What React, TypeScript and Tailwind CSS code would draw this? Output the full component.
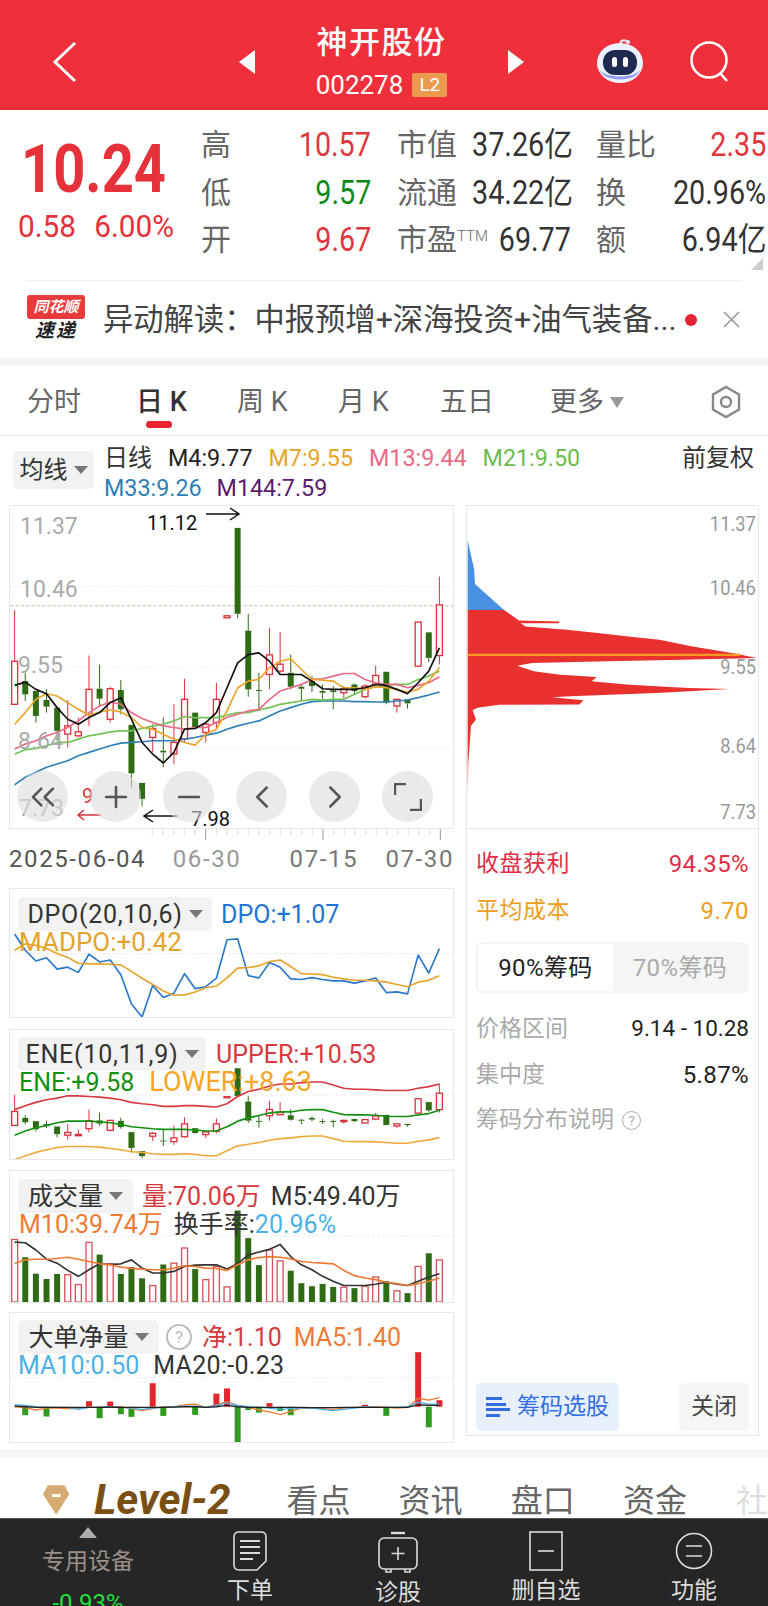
import React from "react";
import { ChevronLeft, ChevronRight, ChevronsLeft, Minus, Plus } from "lucide-react";

// x position of the n-th trading day, in the coordinates of the chart viewBoxes
const xAt = (i: number) => 42 + 32 * i;
const pts = (ys: number[]) => ys.map((y, i) => `${xAt(i)},${y}`).join(" ");

// [hi, bodyTop, bodyBottom, lo, up?]
type Candle = [number, number, number, number, boolean];
const candles: Candle[] = [
  [750, 905, 1035, 1035, true], [940, 965, 1005, 1025, false], [995, 995, 1070, 1090, false],
  [990, 1022, 1042, 1060, false], [1045, 1045, 1115, 1145, false], [1022, 1100, 1125, 1165, true],
  [1075, 1118, 1130, 1135, true], [888, 990, 1065, 1100, true], [915, 988, 1018, 1040, false],
  [982, 988, 1080, 1090, true], [962, 992, 1050, 1065, false], [1097, 1097, 1243, 1285, false],
  [1272, 1272, 1320, 1342, false], [1095, 1108, 1135, 1180, true], [1075, 1175, 1180, 1225, false],
  [1035, 1150, 1185, 1215, true], [958, 1020, 1140, 1150, true], [1060, 1060, 1105, 1110, false],
  [1090, 1095, 1120, 1150, true], [970, 1020, 1090, 1110, true], [768, 768, 774, 774, true],
  [503, 503, 762, 775, false], [762, 813, 990, 1012, false], [940, 992, 995, 1055, false],
  [806, 886, 945, 990, true], [817, 914, 935, 940, true], [885, 940, 982, 990, false],
  [975, 982, 988, 1025, false], [950, 965, 980, 998, false], [975, 995, 1000, 1020, false],
  [980, 993, 998, 1050, false], [980, 988, 1000, 1018, true], [972, 975, 995, 1005, false],
  [975, 980, 1012, 1018, true], [918, 948, 975, 985, true], [937, 937, 1030, 1035, false],
  [1020, 1020, 1040, 1060, true], [1020, 1020, 1032, 1048, false], [787, 787, 920, 920, true],
  [818, 818, 895, 908, false], [650, 735, 888, 915, true],
];

const m4 = [978, 968, 990, 1003, 1045, 1080, 1095, 1075, 1060, 1030, 1015, 1080, 1150, 1185, 1212, 1180, 1110, 1108, 1090, 1060, 985, 910, 885, 880, 905, 945, 945, 945, 965, 988, 990, 990, 990, 985, 975, 978, 990, 1003, 970, 935, 865];
const m7 = [1095, 1060, 1020, 1003, 1010, 1030, 1050, 1068, 1058, 1052, 1058, 1075, 1105, 1110, 1125, 1140, 1150, 1158, 1125, 1110, 1055, 985, 965, 960, 925, 905, 898, 930, 960, 962, 965, 985, 985, 990, 982, 985, 990, 998, 990, 965, 925];
const m13 = [1170, 1155, 1145, 1130, 1120, 1105, 1085, 1060, 1040, 1028, 1035, 1060, 1078, 1090, 1100, 1105, 1110, 1105, 1105, 1090, 1075, 1065, 1055, 1050, 1020, 995, 985, 975, 960, 958, 950, 942, 942, 960, 970, 975, 975, 985, 978, 970, 952];
const m21 = [1185, 1172, 1168, 1160, 1150, 1150, 1140, 1130, 1125, 1118, 1115, 1115, 1108, 1100, 1095, 1085, 1072, 1075, 1075, 1075, 1068, 1060, 1060, 1052, 1045, 1035, 1030, 1025, 1020, 1022, 1020, 1020, 1005, 990, 982, 978, 975, 975, 960, 950, 935];
const m33 = [1278, 1255, 1240, 1225, 1215, 1205, 1190, 1180, 1170, 1160, 1152, 1150, 1148, 1145, 1145, 1145, 1140, 1135, 1128, 1122, 1110, 1100, 1092, 1085, 1070, 1055, 1045, 1035, 1027, 1025, 1025, 1025, 1027, 1027, 1028, 1028, 1025, 1022, 1015, 1007, 998];

const dpo = [160, 210, 243, 233, 268, 262, 278, 222, 246, 240, 285, 375, 415, 318, 355, 342, 282, 328, 322, 296, 178, 175, 288, 295, 248, 262, 298, 300, 294, 300, 304, 304, 311, 304, 295, 340, 338, 344, 225, 280, 205];
const madpo = [210, 190, 195, 205, 220, 232, 250, 252, 252, 253, 255, 275, 296, 315, 335, 348, 347, 338, 325, 320, 295, 265, 263, 258, 245, 240, 260, 282, 283, 285, 293, 298, 302, 302, 304, 308, 315, 322, 308, 302, 288];

const upper = [690, 678, 668, 660, 655, 648, 648, 650, 652, 655, 660, 668, 672, 675, 680, 680, 678, 678, 680, 682, 672, 650, 635, 628, 618, 612, 612, 608, 606, 606, 615, 625, 628, 628, 630, 632, 632, 632, 625, 620, 612];
const ene = [768, 755, 745, 738, 730, 725, 725, 725, 727, 730, 735, 742, 745, 748, 750, 750, 750, 752, 755, 755, 742, 725, 715, 708, 700, 697, 697, 692, 690, 690, 698, 705, 706, 706, 707, 710, 711, 711, 706, 702, 692];
const lower = [842, 830, 820, 812, 805, 802, 802, 802, 804, 808, 812, 818, 820, 824, 826, 826, 824, 826, 830, 830, 815, 800, 795, 790, 783, 778, 776, 772, 770, 770, 778, 786, 787, 787, 788, 790, 792, 792, 786, 782, 775];

// top of each volume bar and whether the day closed up
const vol: [number, boolean][] = [
  [238, true], [292, false], [342, false], [358, false], [343, false], [345, true], [375, true], [247, true], [284, false], [312, true], [343, false],
  [322, false], [356, false], [378, true], [314, false], [310, true], [264, true], [328, false], [360, true], [320, true], [382, true], [150, false],
  [234, false], [316, false], [270, true], [303, true], [333, false], [371, false], [380, false], [373, false], [382, false], [383, true], [386, false],
  [380, true], [352, true], [365, false], [394, true], [401, false], [320, true], [280, false], [300, true],
];
const volM5 = [246, 248, 270, 298, 310, 332, 350, 330, 312, 314, 312, 300, 325, 340, 340, 335, 320, 316, 315, 315, 328, 312, 285, 276, 268, 253, 290, 315, 330, 350, 365, 378, 378, 378, 374, 368, 374, 378, 365, 352, 342];
const volM10 = [310, 300, 298, 298, 296, 292, 298, 305, 312, 315, 322, 326, 328, 330, 330, 325, 318, 320, 325, 326, 332, 315, 300, 293, 290, 292, 297, 305, 308, 310, 312, 332, 348, 355, 360, 368, 372, 378, 372, 365, 355];

const netBars: [number, number][] = [
  [1, 768], [3, 772], [7, 725], [8, 777], [9, 726], [10, 765], [11, 773], [13, 670], [14, 770], [17, 767], [19, 702], [20, 686],
  [21, 850], [22, 752], [23, 760], [24, 731], [25, 755], [26, 768], [33, 736], [35, 770], [38, 575], [39, 805], [40, 722],
];
const netOrange = [742, 745, 752, 746, 746, 748, 748, 744, 744, 742, 742, 748, 754, 748, 742, 742, 736, 734, 744, 736, 726, 738, 744, 752, 758, 766, 756, 746, 746, 748, 750, 746, 744, 742, 742, 744, 746, 744, 716, 722, 714];
const netBlue = [736, 738, 742, 744, 744, 744, 750, 744, 744, 742, 744, 746, 750, 746, 744, 742, 740, 740, 744, 738, 730, 738, 742, 744, 746, 750, 748, 746, 746, 750, 754, 750, 746, 742, 744, 744, 744, 742, 728, 734, 734];
const netBlack = [740, 742, 744, 744, 744, 744, 744, 744, 744, 743, 744, 744, 744, 744, 744, 743, 742, 742, 744, 742, 738, 742, 744, 744, 744, 744, 744, 744, 745, 745, 745, 744, 744, 744, 744, 744, 744, 744, 736, 738, 738];

// chip distribution, in zoom coordinates of the right hand chart
const chipBlue = "20,330 40,420 42,462 130,540 20,540";
const chipRed = "20,540 130,540 175,572 297,575 297,580 180,580 195,590 320,600 420,610 520,622 600,630 700,650 820,670 895,685 670,690 440,695 215,700 170,708 220,725 300,735 410,742 395,755 500,765 590,770 690,775 812,778 690,785 590,790 470,795 330,800 275,803 370,812 358,825 115,826 50,835 35,842 45,870 30,890 22,1000 20,1090";

const Caret = () => (
  <span className="ml-[6px] inline-block w-0 h-0 border-x-[7px] border-x-transparent border-t-[8px] border-t-[#777]" />
);

const Chip = ({ label, w, spread = "" }: { label: string; w: string; spread?: string }) => (
  <span className={`${w} h-[34px] bg-[#f2f2f2] rounded-[5px] flex items-center justify-center text-[25px] text-[#333] whitespace-nowrap ${spread}`}>
    {label}
    <Caret />
  </span>
);

const CandleSet = ({ map = (y: number) => y, w = 18 }: { map?: (y: number) => number; w?: number }) => (
  <>
    {candles.map(([hi, top, bottom, lo, up], i) => {
      const c = up ? "#d8333c" : "#2e6b14";
      const x = xAt(i);
      const t = map(top);
      const h = Math.max(map(bottom) - t, 3);
      return (
        <g key={i}>
          <line x1={x} x2={x} y1={map(hi)} y2={t} stroke={c} strokeWidth={3} />
          <line x1={x} x2={x} y1={t + h} y2={map(lo)} stroke={c} strokeWidth={3} />
          <rect x={x - w / 2} y={t} width={w} height={h} fill={up ? "#fff" : c} stroke={c} strokeWidth={up ? 4 : 0} />
        </g>
      );
    })}
  </>
);

const Line = ({ ys, c, w = 5 }: { ys: number[]; c: string; w?: number }) => (
  <polyline points={pts(ys)} fill="none" stroke={c} strokeWidth={w} strokeLinejoin="round" />
);

const RoundBtn = ({ children }: { children: React.ReactNode }) => (
  <span className="w-[51px] h-[51px] rounded-full bg-[#dcdcdc]/60 flex items-center justify-center text-[#555]">{children}</span>
);

const StatCell = ({ label, value, color }: { label: React.ReactNode; value: string; color: string }) => (
  <div className="w-full h-[47.5px] flex items-center justify-between">
    <span className="text-[30px] text-[#666] whitespace-nowrap">{label}</span>
    <span className={`inline-block scale-x-[0.87] origin-right text-[33px] ${color} whitespace-nowrap`}>{value}</span>
  </div>
);

const AxisLabel = ({ top, children }: { top: string; children: React.ReactNode }) => (
  <span className={`absolute right-[2px] ${top} inline-block scale-x-[0.87] origin-right text-[21px] leading-[26px] text-[#999]`}>{children}</span>
);

const NavItem = ({ label, icon }: { label: string; icon: React.ReactNode }) => (
  <div className="w-[148px] flex flex-col items-center">
    <div className="h-[42px] mt-[12px] flex items-center justify-center">{icon}</div>
    <span className="mt-[5px] text-[23px] leading-[30px] text-[#ddd]">{label}</span>
  </div>
);

export default function App() {
  return (
    <div className="w-[768px] h-[1606px] overflow-hidden bg-white flex flex-col font-['Roboto','Noto_Sans_CJK_SC',sans-serif]">
      {/* Title bar */}
      <div className="h-[110px] shrink-0 bg-[#ef303b] flex items-center text-white pt-[14px]">
        <div className="w-[239px] pl-[52px]">
          <svg width="26" height="42" viewBox="0 0 26 42" fill="none" stroke="#fff" strokeWidth="3">
            <path d="M23 2 L3 21 L23 40" />
          </svg>
        </div>
        <span className="w-0 h-0 border-y-[12px] border-y-transparent border-r-[16px] border-r-white" />
        <div className="w-[253px] flex flex-col items-center">
          <span className="text-[31px] leading-[40px] font-medium tracking-[1.5px]">神开股份</span>
          <div className="flex items-center mt-[6px] gap-[9px]">
            <span className="text-[26px] leading-[32px]">002278</span>
            <span className="w-[35px] h-[24px] rounded-[2px] bg-[#ec9a4e] text-[19px] leading-[24px] text-center">L2</span>
          </div>
        </div>
        <span className="w-0 h-0 border-y-[12px] border-y-transparent border-l-[16px] border-l-white" />
        <div className="ml-[72px] -mt-[2px]">
          <svg width="48" height="48" viewBox="0 0 48 48">
            <path d="M24 8 C24 3 29 2 31 5" fill="none" stroke="#dfe6ff" strokeWidth="2" />
            <circle cx="32" cy="5" r="2" fill="#dfe6ff" />
            <ellipse cx="24" cy="26" rx="23" ry="20" fill="#eef1ff" />
            <path d="M3 32 C8 46 40 46 45 32 C40 42 8 42 3 32Z" fill="#8d9cf2" />
            <rect x="7" y="13" width="34" height="25" rx="12" fill="#1d2a52" />
            <rect x="16" y="20" width="5" height="10" rx="2.5" fill="#fff" />
            <rect x="27" y="20" width="5" height="10" rx="2.5" fill="#fff" />
          </svg>
        </div>
        <div className="ml-[45px] -mt-[2px]">
          <svg width="42" height="42" viewBox="0 0 42 42" fill="none" stroke="#fff" strokeWidth="2.6">
            <circle cx="20" cy="20" r="17.5" />
            <path d="M31 33 L38 41" />
          </svg>
        </div>
      </div>

      {/* Quote block */}
      <div className="h-[170px] shrink-0 flex pt-[11px] relative">
        <div className="w-[201px] pl-[21px]">
          <div className="inline-block scale-x-[0.85] origin-left text-[66px] leading-[66px] mt-[16px] font-bold text-[#e6313a] whitespace-nowrap">10.24</div>
          <div className="scale-x-[0.96] origin-left flex gap-[19px] -ml-[3px] mt-[6px] text-[31px] leading-[36px] text-[#e6313a]">
            <span>0.58</span>
            <span>6.00%</span>
          </div>
        </div>
        <div className="flex flex-col w-[196px] pr-[26px]">
          <StatCell label="高" value="10.57" color="text-[#e0363c]" />
          <StatCell label="低" value="9.57" color="text-[#0e8a14]" />
          <StatCell label="开" value="9.67" color="text-[#e0363c]" />
        </div>
        <div className="flex flex-col w-[199px] pr-[28px]">
          <StatCell label="市值" value="37.26亿" color="text-[#333]" />
          <StatCell label="流通" value="34.22亿" color="text-[#333]" />
          <StatCell
            label={
              <>
                市盈<span className="text-[15px] align-[9px] font-light">TTM</span>
              </>
            }
            value="69.77"
            color="text-[#333]"
          />
        </div>
        <div className="flex flex-col w-[170px]">
          <StatCell label="量比" value="2.35" color="text-[#e0363c]" />
          <StatCell label="换" value="20.96%" color="text-[#333]" />
          <StatCell label="额" value="6.94亿" color="text-[#333]" />
        </div>
        <span className="absolute right-[5px] bottom-[10px] w-0 h-0 border-l-[12px] border-l-transparent border-b-[12px] border-b-[#ccc]" />
      </div>

      {/* News strip */}
      <div className="h-[78px] shrink-0 mx-[27px] border-t border-[#f0f0f0] flex items-center relative">
        <div className="w-[58px] h-[48px] flex flex-col items-center -mt-[2px] italic font-bold">
          <span className="w-[58px] h-[24px] bg-[#e83a3a] rounded-[3px] text-white text-[15px] leading-[24px] text-center">同花顺</span>
          <span className="text-[#222] text-[19px] leading-[24px] tracking-[2px]">速递</span>
        </div>
        <span className="ml-[18px] text-[30.3px] text-[#444] whitespace-nowrap">异动解读：中报预增+深海投资+油气装备...</span>
        <span className="ml-[9px] w-[12px] h-[12px] rounded-full bg-[#e8222e]" />
        <svg className="ml-[26px]" width="17" height="17" viewBox="0 0 17 17" stroke="#999" strokeWidth="1.6">
          <path d="M1 1 L16 16 M16 1 L1 16" />
        </svg>
      </div>
      <div className="h-[8px] shrink-0 bg-[#f5f5f5]" />

      {/* Period tabs */}
      <div className="h-[70px] shrink-0 border-b border-[#ececec] flex items-center pt-[3px] text-[27px] text-[#666] relative">
        <span className="ml-[27px] w-[109px]">分时</span>
        <span className="w-[101px] text-[#333] font-medium relative">
          日 K
          <span className="absolute left-[10px] top-[39px] w-[26px] h-[7px] rounded-full bg-[#e8222e]" />
        </span>
        <span className="w-[101px]">周 K</span>
        <span className="w-[102px]">月 K</span>
        <span className="w-[110px]">五日</span>
        <span>更多</span>
        <span className="ml-[6px] w-0 h-0 border-x-[7px] border-x-transparent border-t-[11px] border-t-[#999]" />
        <svg className="ml-[86px]" width="32" height="34" viewBox="0 0 32 34" fill="none" stroke="#888" strokeWidth="2.4">
          <path d="M16 2 L29 9.5 V24.5 L16 32 L3 24.5 V9.5 Z" />
          <circle cx="16" cy="17" r="5" />
        </svg>
      </div>

      {/* Moving average legend */}
      <div className="h-[69px] shrink-0 flex relative text-[23.3px]">
        <div className="ml-[13px] mt-[15px] w-[81px] h-[38px] bg-[#f2f2f2] rounded-[5px] flex items-center justify-center text-[24px] text-[#333]">
          均线
          <Caret />
        </div>
        <div className="ml-[10px] mt-[7px] w-[480px] leading-[30px] whitespace-nowrap">
          <div className="flex gap-[16px]">
            <span className="text-[#333] text-[24px]">日线</span>
            <span className="text-[#222]">M4:9.77</span>
            <span className="text-[#e9a42a]">M7:9.55</span>
            <span className="text-[#ea6a86]">M13:9.44</span>
            <span className="text-[#6cbc52]">M21:9.50</span>
          </div>
          <div className="flex gap-[15px]">
            <span className="text-[#2d7fb5]">M33:9.26</span>
            <span className="text-[#5b1a6b]">M144:7.59</span>
          </div>
        </div>
        <span className="ml-auto mr-[14px] mt-[7px] text-[24px] leading-[30px] text-[#333]">前复权</span>
      </div>

      <div className="flex-1 min-h-0 flex items-stretch">
        {/* Left column: candles and indicators */}
        <div className="ml-[9px] w-[445px] shrink-0 flex flex-col">
          <div className="h-[324px] border border-[#e8e8e8] relative">
            <svg className="w-full h-full" viewBox="28 437 1335 971" preserveAspectRatio="none">
              <line x1="28" x2="1363" y1="680" y2="680" stroke="#e4e4e4" strokeWidth="2" strokeDasharray="8 6" />
              <line x1="28" x2="1363" y1="923" y2="923" stroke="#e4e4e4" strokeWidth="2" strokeDasharray="8 6" />
              <line x1="28" x2="1363" y1="1167" y2="1167" stroke="#e4e4e4" strokeWidth="2" strokeDasharray="8 6" />
              <line x1="28" x2="1363" y1="738" y2="738" stroke="#c9bc9a" strokeWidth="3" strokeDasharray="10 6" />
              <CandleSet />
              <Line ys={m33} c="#2d7fb5" />
              <Line ys={m21} c="#72c257" />
              <Line ys={m13} c="#ea6a86" />
              <Line ys={m7} c="#e9a42a" />
              <Line ys={m4} c="#111" />
            </svg>
            <span className="absolute left-[10px] top-[7px] text-[23px] leading-[28px] text-[#aaa]">11.37</span>
            <span className="absolute left-[10px] top-[70px] text-[23px] leading-[28px] text-[#aaa]">10.46</span>
            <span className="absolute left-[8px] top-[146px] text-[23px] leading-[28px] text-[#aaa]">9.55</span>
            <span className="absolute left-[8px] top-[222px] text-[23px] leading-[28px] text-[#aaa]">8.64</span>
            <span className="absolute left-[9px] top-[289px] text-[23px] leading-[28px] text-[#aaa]">7.73</span>
            <span className="absolute left-[137px] top-[4px] text-[20px] leading-[26px] text-[#111]">11.12</span>
            <svg className="absolute left-[195px] top-[1px]" width="36" height="14" viewBox="0 0 36 14" fill="none" stroke="#111" strokeWidth="1.5">
              <path d="M1 7 H34 M25 1 L34 7 L25 13" />
            </svg>
            <span className="absolute left-[181px] top-[303px] text-[20px] leading-[20px] text-[#111]">7.98</span>
            <svg className="absolute left-[132px] top-[303px]" width="36" height="14" viewBox="0 0 36 14" fill="none" stroke="#111" strokeWidth="1.5">
              <path d="M35 7 H2 M11 1 L2 7 L11 13" />
            </svg>
            <span className="absolute left-[72px] top-[278px] text-[20px] leading-[24px] text-[#d8333c]">9</span>
            <svg className="absolute left-[66px] top-[303px]" width="26" height="12" viewBox="0 0 26 12" fill="none" stroke="#d8333c" strokeWidth="1.5">
              <path d="M25 6 H2 M8 1 L2 6 L8 11" />
            </svg>
            <div className="absolute left-[7px] top-[265px] flex gap-[22px]">
              <RoundBtn><ChevronsLeft size={40} strokeWidth={1.5} /></RoundBtn>
              <RoundBtn><Plus size={34} strokeWidth={1.8} /></RoundBtn>
              <RoundBtn><Minus size={34} strokeWidth={1.8} /></RoundBtn>
              <RoundBtn><ChevronLeft size={38} strokeWidth={1.6} /></RoundBtn>
              <RoundBtn><ChevronRight size={38} strokeWidth={1.6} /></RoundBtn>
              <RoundBtn>
                <svg width="28" height="28" viewBox="0 0 28 28" fill="none" stroke="#555" strokeWidth="2.4">
                  <path d="M1 12 V1 H12 M27 16 V27 H16" />
                </svg>
              </RoundBtn>
            </div>
          </div>

          {/* Date axis */}
          <svg className="w-[445px] h-[12px] shrink-0" viewBox="0 0 445 12">
            {Array.from({ length: 28 }).map((_, k) => {
              const i = k + 13;
              const x = (xAt(i) - 28) / 3;
              const big = i === 18 || i === 29 || i === 40;
              return <line key={i} x1={x} x2={x} y1="0" y2={big ? 11 : 6} stroke={big ? "#999" : "#ddd"} strokeWidth="1" />;
            })}
          </svg>
          <div className="h-[35px] shrink-0 flex items-center text-[24px] tracking-[1.6px] whitespace-nowrap">
            <span className="text-[#555] w-[164px]">2025-06-04</span>
            <span className="text-[#999] w-[117px]">06-30</span>
            <span className="text-[#777] w-[96px]">07-15</span>
            <span className="text-[#777]">07-30</span>
          </div>

          {/* DPO */}
          <div className="h-[130px] mt-[12px] shrink-0 border border-[#e8e8e8] relative">
            <svg className="w-full h-full" viewBox="28 22 1335 393" preserveAspectRatio="none">
              <line x1="28" x2="1363" y1="220" y2="220" stroke="#ddd" strokeWidth="2" strokeDasharray="8 6" />
              <Line ys={dpo} c="#2a78c8" />
              <Line ys={madpo} c="#e5a32c" />
            </svg>
            <div className="absolute left-[8px] top-[8px] w-[430px] text-[25px] leading-[29px] whitespace-nowrap">
              <div className="flex items-center gap-[9px]">
                <Chip label="DPO(20,10,6)" w="w-[194px]" spread="tracking-[0.7px]" />
                <span className="text-[#1f74d0]">DPO:+1.07</span>
              </div>
              <div className="text-[#e5a32c] ml-[1px] -mt-[3px] text-[26px]">MADPO:+0.42</div>
            </div>
          </div>

          {/* ENE */}
          <div className="h-[131px] mt-[11px] shrink-0 border border-[#e8e8e8] relative">
            <svg className="w-full h-full" viewBox="28 448 1335 392" preserveAspectRatio="none">
              <line x1="28" x2="1363" y1="645" y2="645" stroke="#ddd" strokeWidth="2" strokeDasharray="8 6" />
              <CandleSet map={(y) => 640 + (y - 735) * 0.327} />
              <Line ys={upper} c="#d8393f" />
              <Line ys={ene} c="#129012" />
              <Line ys={lower} c="#f0a83a" />
            </svg>
            <div className="absolute left-[8px] top-[7px] w-[430px] text-[25px] leading-[29px] whitespace-nowrap">
              <div className="flex items-center gap-[10px]">
                <Chip label="ENE(10,11,9)" w="w-[188px]" spread="tracking-[0.8px]" />
                <span className="text-[#d8393f]">UPPER:+10.53</span>
              </div>
              <div className="flex gap-[15px] ml-[1px] -mt-[3px]">
                <span className="text-[#129012]">ENE:+9.58</span>
                <span className="text-[#f5a623] text-[27px]">LOWER:+8.63</span>
              </div>
            </div>
          </div>

          {/* Volume */}
          <div className="h-[133px] mt-[10px] shrink-0 border border-[#e8e8e8] relative">
            <svg className="w-full h-full" viewBox="28 30 1335 398" preserveAspectRatio="none">
              <line x1="28" x2="1363" y1="228" y2="228" stroke="#ddd" strokeWidth="2" strokeDasharray="8 6" />
              {vol.map(([top, up], i) => (
                <rect
                  key={i}
                  x={xAt(i) - 9}
                  y={top}
                  width={18}
                  height={428 - top}
                  fill={up ? "#fff" : "#2e6b14"}
                  stroke={up ? "#d8505a" : "none"}
                  strokeWidth={4}
                />
              ))}
              <Line ys={volM5} c="#333" />
              <Line ys={volM10} c="#ee7b35" />
            </svg>
            <div className="absolute left-[8px] top-[8px] w-[430px] text-[25px] leading-[29px] whitespace-nowrap">
              <div className="flex items-center">
                <Chip label="成交量" w="w-[115px]" />
                <span className="text-[#d63a3f] ml-[9px]">量:70.06万</span>
                <span className="text-[#333] ml-[10px]">M5:49.40万</span>
              </div>
              <div className="flex ml-[1px] -mt-[3px]">
                <span className="text-[#ee7b35]">M10:39.74万</span>
                <span className="text-[#333] ml-[11px]">换手率:</span>
                <span className="text-[#4db0e6]">20.96%</span>
              </div>
            </div>
          </div>

          {/* Net large orders */}
          <div className="h-[131px] mt-[9px] shrink-0 border border-[#e8e8e8] relative">
            <svg className="w-full h-full" viewBox="28 455 1335 395" preserveAspectRatio="none">
              <line x1="28" x2="1363" y1="652" y2="652" stroke="#ddd" strokeWidth="2" strokeDasharray="8 6" />
              {netBars.map(([i, top]) => (
                <rect
                  key={i}
                  x={xAt(i) - 9}
                  y={Math.min(top, 742)}
                  width={18}
                  height={Math.abs(top - 742)}
                  fill={top < 742 ? "#e5252c" : "#2f9a1f"}
                />
              ))}
              <Line ys={netOrange} c="#ee7b35" w={4} />
              <Line ys={netBlue} c="#4db0e6" w={4} />
              <Line ys={netBlack} c="#222" w={4} />
            </svg>
            <div className="absolute left-[8px] top-[7px] w-[430px] text-[25px] leading-[29px] whitespace-nowrap">
              <div className="flex items-center">
                <Chip label="大单净量" w="w-[141px]" />
                <span className="ml-[7px] w-[26px] h-[26px] rounded-full border-2 border-[#bbb] text-[#bbb] text-[17px] leading-[22px] text-center">?</span>
                <span className="text-[#d63a3f] ml-[10px]">净:1.10</span>
                <span className="text-[#ee7b35] ml-[12px]">MA5:1.40</span>
              </div>
              <div className="flex -mt-[3px]">
                <span className="text-[#4db0e6]">MA10:0.50</span>
                <span className="text-[#333] ml-[14px] tracking-[0.3px]">MA20:-0.23</span>
              </div>
            </div>
          </div>
        </div>

        {/* Right column: chip distribution */}
        <div className="ml-[12px] w-[293px] h-[931px] shrink-0 border border-[#e8e8e8] flex flex-col">
          <div className="h-[323px] shrink-0 border-b border-[#e8e8e8] relative">
            <svg className="w-full h-full" viewBox="18 227 880 970" preserveAspectRatio="none">
              <polygon points={chipBlue} fill="#4a90e2" />
              <polygon points={chipRed} fill="#e8302f" />
              <rect x="20" y="672" width="825" height="7" fill="#f59a23" />
            </svg>
            <AxisLabel top="top-[5px]">11.37</AxisLabel>
            <AxisLabel top="top-[69px]">10.46</AxisLabel>
            <AxisLabel top="top-[148px]">9.55</AxisLabel>
            <AxisLabel top="top-[227px]">8.64</AxisLabel>
            <AxisLabel top="top-[293px]">7.73</AxisLabel>
          </div>
          <div className="flex-1 min-h-0 px-[9px] pb-[4px] flex flex-col text-[23px]">
            <div className="mt-[20px] h-[30px] flex items-center justify-between text-[#de2e45]">
              <span className="tracking-[0.5px]">收盘获利</span>
              <span className="text-[24px] tracking-[0.4px]">94.35%</span>
            </div>
            <div className="mt-[17px] h-[30px] flex items-center justify-between text-[#ef9d1c]">
              <span className="tracking-[0.5px]">平均成本</span>
              <span className="text-[24px] tracking-[0.4px]">9.70</span>
            </div>
            <div className="mt-[16px] h-[51px] rounded-[6px] bg-[#f5f5f5] flex p-[2px]">
              <span className="w-[135px] bg-white rounded-l-[4px] flex items-center justify-center text-[24px] tracking-[0.4px] text-[#222]">90%筹码</span>
              <span className="flex-1 flex items-center justify-center text-[24px] tracking-[0.4px] text-[#aaa]">70%筹码</span>
            </div>
            <div className="mt-[21px] h-[30px] flex items-center justify-between">
              <span className="text-[#aaa]">价格区间</span>
              <span className="text-[#222] text-[22.5px]">9.14 - 10.28</span>
            </div>
            <div className="mt-[16px] h-[30px] flex items-center justify-between">
              <span className="text-[#aaa]">集中度</span>
              <span className="text-[#222] text-[24px] tracking-[0.4px]">5.87%</span>
            </div>
            <div className="mt-[15px] h-[30px] flex items-center text-[#aaa]">
              筹码分布说明
              <span className="ml-[8px] w-[19px] h-[19px] rounded-full border border-[#aaa] text-[13px] leading-[17px] text-center">?</span>
            </div>
            <div className="mt-auto flex justify-between">
              <div className="w-[143px] h-[48px] rounded-[5px] bg-[#e9f0fd] flex items-center justify-center gap-[7px] text-[#2f6fe0]">
                <svg width="24" height="22" viewBox="0 0 24 22" fill="#2f6fe0">
                  <rect x="0" y="1" width="16" height="3" />
                  <rect x="0" y="7" width="20" height="3" />
                  <rect x="0" y="12" width="24" height="3" />
                  <rect x="0" y="18" width="14" height="3" />
                </svg>
                筹码选股
              </div>
              <div className="w-[70px] h-[48px] rounded-[5px] bg-[#f5f5f5] flex items-center justify-center text-[#444]">关闭</div>
            </div>
          </div>
        </div>
      </div>

      {/* Detail tabs */}
      <div className="h-[8px] shrink-0 bg-[#f5f5f5]" />
      <div className="h-[61px] shrink-0 flex items-end whitespace-nowrap">
        <svg className="ml-[42px] mb-[2px]" width="29" height="32" viewBox="0 0 29 32">
          <path d="M6 1 H23 L28 10 L14.5 31 L1 10 Z" fill="#d6ab72" />
          <rect x="10" y="10" width="9" height="3" fill="#fff" />
        </svg>
        <span className="ml-[24px] w-[197px] text-[42px] leading-[50px] -mb-[7px] italic font-bold text-[#7a4f14]">Level-2</span>
        <span className="w-[115px] text-[32px] leading-[34px] text-[#666]">看点</span>
        <span className="w-[115px] text-[32px] leading-[34px] text-[#666]">资讯</span>
        <span className="w-[115px] text-[32px] leading-[34px] text-[#666]">盘口</span>
        <span className="w-[116px] text-[32px] leading-[34px] text-[#666]">资金</span>
        <span className="text-[32px] leading-[34px] text-[#ddd]">社</span>
      </div>

      {/* Bottom bar */}
      <div className="h-[88px] shrink-0 bg-[#262626] border-t border-[#555] flex overflow-hidden relative">
        <div className="w-[176px] flex flex-col items-center">
          <span className="mt-[8px] w-0 h-0 border-x-[9px] border-x-transparent border-b-[11px] border-b-[#aaa]" />
          <span className="mt-[9px] text-[23px] leading-[30px] text-[#9c9088]">专用设备</span>
          <span className="mt-[12px] text-[24px] leading-[28px] text-[#22e03f]">-0.93%</span>
        </div>
        <NavItem
          label="下单"
          icon={
            <svg width="34" height="40" viewBox="0 0 34 40" fill="none" stroke="#ddd" strokeWidth="1.6">
              <path d="M6 1 H28 Q33 1 33 6 V30 L24 39 H6 Q1 39 1 34 V6 Q1 1 6 1Z" />
              <path d="M7 10 H27 M7 16 H27 M7 22 H27 M7 28 H20" strokeWidth="2" />
            </svg>
          }
        />
        <NavItem
          label="诊股"
          icon={
            <svg width="40" height="42" viewBox="0 0 40 42" fill="none" stroke="#ddd" strokeWidth="1.6">
              <path d="M13 2 H27" strokeWidth="2.4" />
              <rect x="1" y="7" width="38" height="31" rx="5" />
              <path d="M20 16 V29 M13.5 22.5 H26.5" />
              <path d="M8 38 V41 H13 V38 M27 38 V41 H32 V38" />
            </svg>
          }
        />
        <NavItem
          label="删自选"
          icon={
            <svg width="34" height="40" viewBox="0 0 34 40" fill="none" stroke="#ddd" strokeWidth="1.6">
              <rect x="1" y="1" width="32" height="38" />
              <path d="M9 20 H25" />
            </svg>
          }
        />
        <NavItem
          label="功能"
          icon={
            <svg width="38" height="38" viewBox="0 0 38 38" fill="none" stroke="#ddd" strokeWidth="1.6">
              <circle cx="19" cy="19" r="17.5" />
              <path d="M11 14 H27 M11 24 H27" />
            </svg>
          }
        />
      </div>
    </div>
  );
}
